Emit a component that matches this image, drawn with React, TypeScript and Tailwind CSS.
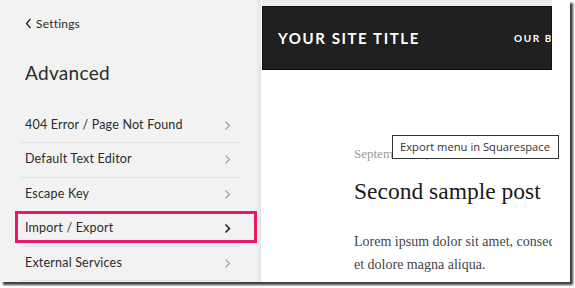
import React from "react";

const Chevron = ({ dark }: { dark?: boolean }) => (
  <svg width="7" height="11" viewBox="0 0 7 11" className="shrink-0">
    <polyline
      points="1.5,1.5 5.5,5.5 1.5,9.5"
      fill="none"
      stroke={dark ? "#222" : "#a0a0a0"}
      strokeWidth={dark ? 1.6 : 1.1}
    />
  </svg>
);

const items = [
  "404 Error / Page Not Found",
  "Default Text Editor",
  "Escape Key",
  "Import / Export",
  "External Services",
];

export default function App() {
  return (
    <div className="w-[575px] h-[288px] bg-white relative overflow-hidden">
      <div className="w-[570px] h-[282px] bg-white flex shadow-[3px_3px_2px_rgba(0,0,0,0.75)] relative">
        {/* Left settings panel */}
        <div
          className="w-[261px] h-full bg-[#f2f2f2] shrink-0 shadow-[inset_-5px_0_5px_-3px_rgba(0,0,0,0.07)] text-[#2b2b2b] flex flex-col"
          style={{ fontFamily: "Lato, 'Open Sans', sans-serif" }}
        >
          <div className="flex items-center gap-[4px] pl-[25px] pt-[16px] h-[31px] text-[12px]">
            <svg width="7" height="11" viewBox="0 0 7 11">
              <polyline points="5.5,1 1.5,5.5 5.5,10" fill="none" stroke="#222" strokeWidth="1.3" />
            </svg>
            <span className="tracking-[0.2px]">Settings</span>
          </div>
          <div className="pl-[25px] pt-[30px] h-[77.5px] text-[19px] leading-[24px] tracking-[0.3px]">
            Advanced
          </div>
          <div className="mx-[21px] flex flex-col">
            {items.map((t, i) => (
              <div
                key={t}
                className="h-[34.5px] border-b border-[#e2e2e2] flex items-center justify-between pl-[4px] pr-[9px] text-[12.5px] tracking-[0.2px]"
              >
                <span>{t}</span>
                <Chevron dark={i === 3} />
              </div>
            ))}
          </div>
        </div>

        {/* Preview */}
        <div className="flex-1 h-full bg-white relative">
          <div className="w-[290px] h-full flex flex-col overflow-hidden ml-[1px]">
            <div className="h-[6px] bg-[#ececec] shrink-0" />
            <div className="h-[64px] bg-[#202020] border border-[#111] shrink-0 flex items-center pl-[15px] whitespace-nowrap overflow-hidden"
              style={{ fontFamily: "Lato, 'Open Sans', sans-serif" }}>
              <span className="text-white text-[15px] font-bold tracking-[1.6px]">YOUR SITE TITLE</span>
              <span className="text-white text-[10px] font-bold tracking-[1.6px] ml-[94px]">OUR BLOG</span>
            </div>
            <div
              className="pl-[92px] pt-[75px] whitespace-nowrap"
              style={{ fontFamily: "'Liberation Serif', serif" }}
            >
              <div className="text-[13px] text-[#9a9a9a] leading-[18px]">September 24, 2017</div>
              <div className="text-[23.5px] text-[#1a1a1a] leading-[30px] mt-[13px]">Second sample post</div>
              <div className="text-[14px] text-[#444] leading-[23px] mt-[24px]">
                Lorem ipsum dolor sit amet, consectetur adipiscing elit
              </div>
              <div className="text-[14px] text-[#444] leading-[23px]">et dolore magna aliqua.</div>
            </div>
          </div>
          {/* tooltip */}
          <div
            className="absolute left-[131px] top-[135px] w-[167px] h-[24px] pl-[7px] bg-white border border-[#333] flex items-center text-[11.2px] text-[#333] whitespace-nowrap"
            style={{ fontFamily: "'Open Sans', 'Noto Sans', sans-serif" }}
          >
            Export menu in Squarespace
          </div>
        </div>

        {/* highlight annotation */}
        <div className="absolute left-[15px] top-[211px] w-[242px] h-[32px] border-[3px] border-[#e8196b] pointer-events-none" />
      </div>
    </div>
  );
}
